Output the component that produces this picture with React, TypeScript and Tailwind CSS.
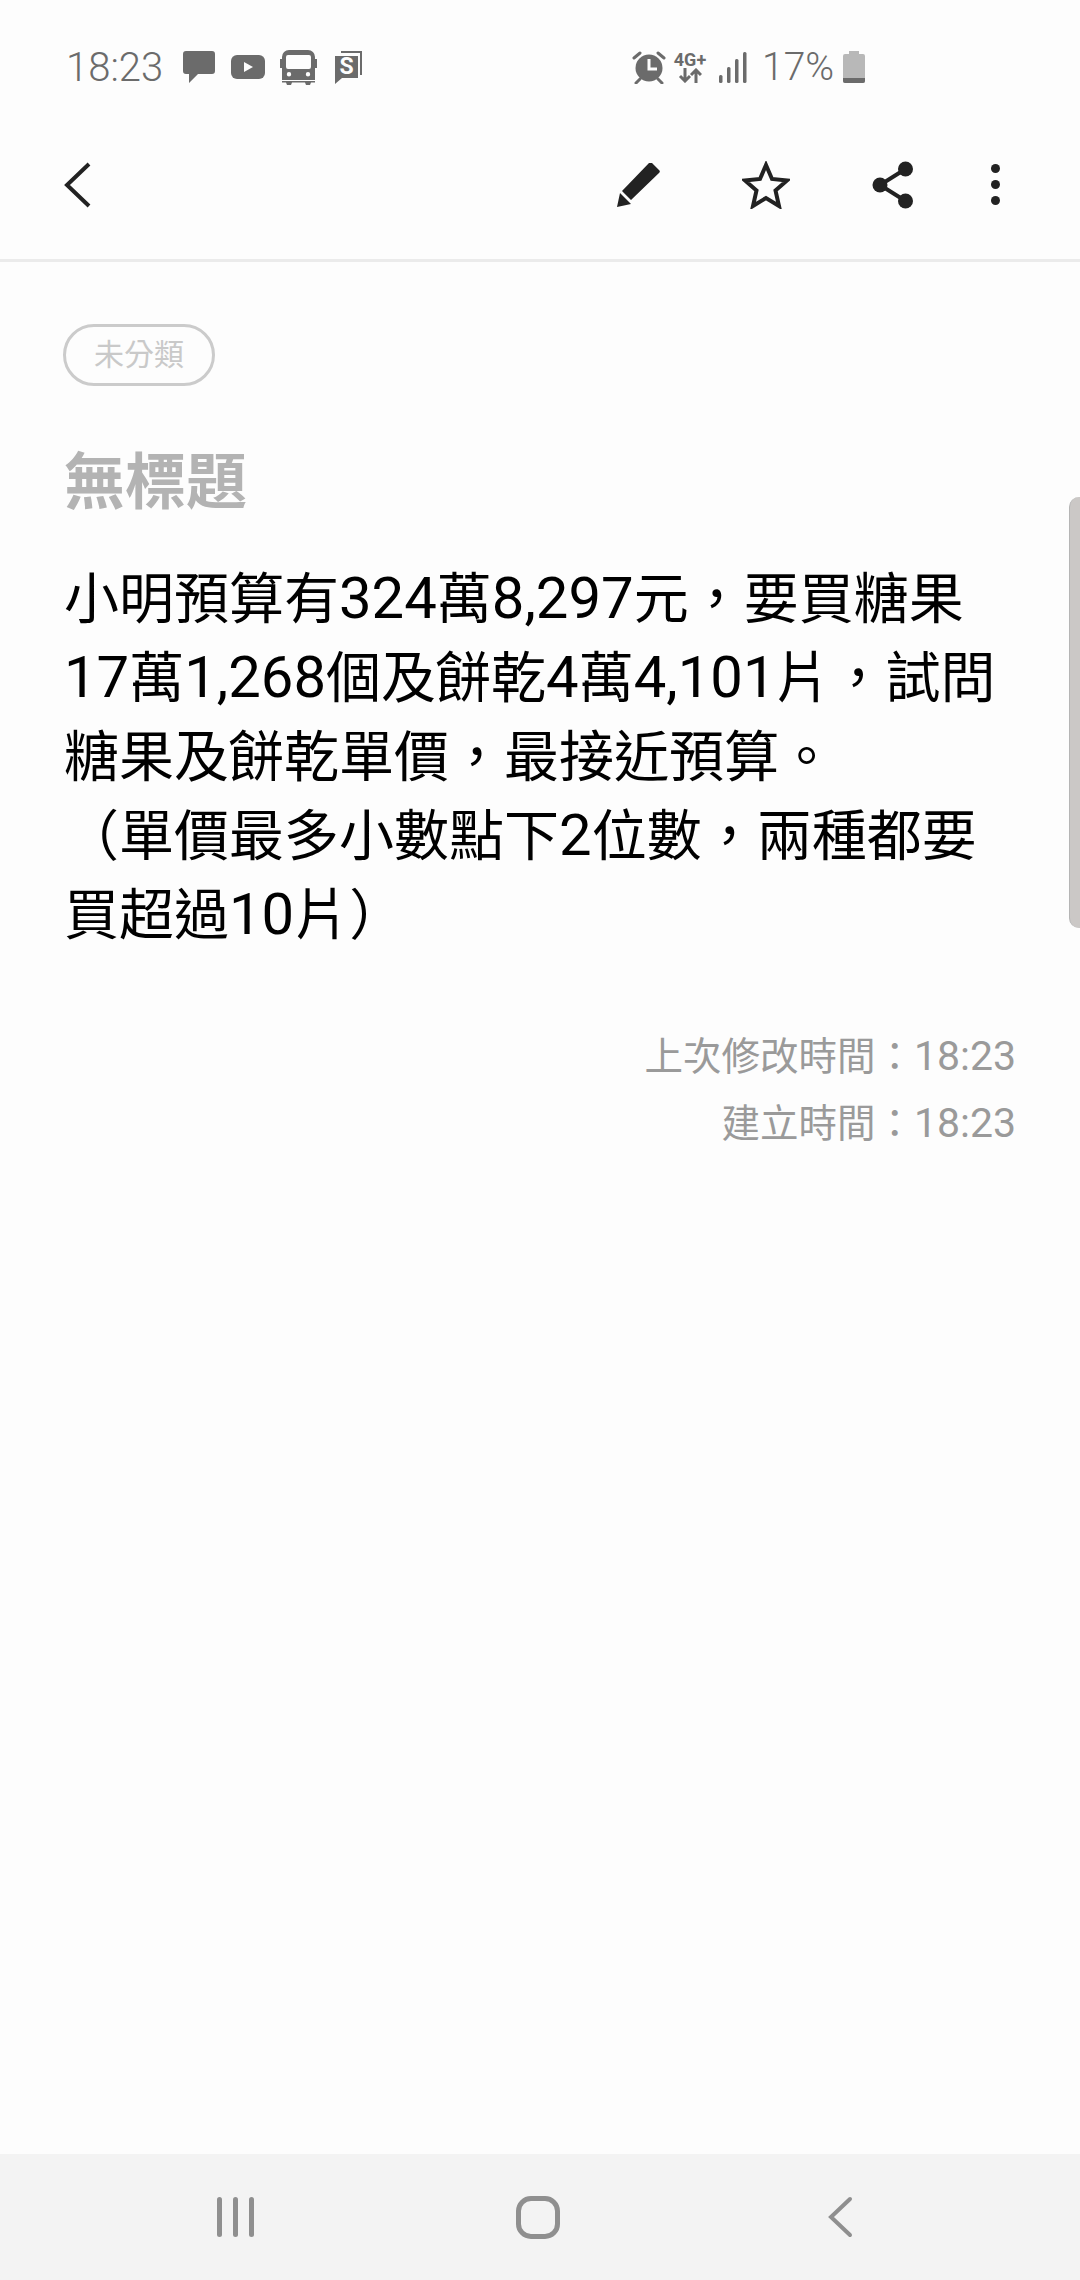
const cjk = 'font-["Roboto","Noto_Sans_CJK_TC",sans-serif]';

function MessageIcon() {
  return (
    <svg width="34" height="34" viewBox="0 0 34 34" className="fill-[#6b6b6b]">
      <path d="M4 1h26a3 3 0 0 1 3 3v17a3 3 0 0 1-3 3H16l-9 9v-9H4a3 3 0 0 1-3-3V4a3 3 0 0 1 3-3z" />
    </svg>
  );
}

function YoutubeIcon() {
  return (
    <svg width="34" height="24" viewBox="0 0 34 24">
      <rect width="34" height="24" rx="6" fill="#6b6b6b" />
      <path d="M13 7l9 5-9 5z" fill="#fdfdfd" />
    </svg>
  );
}

function BusIcon() {
  return (
    <svg width="37" height="35" viewBox="0 0 37 35" className="fill-[#6b6b6b]">
      <path
        fillRule="evenodd"
        d="M9 0h19a7 7 0 0 1 7 7v2h2v9h-2v12H2V18H0V9h2V7a7 7 0 0 1 7-7zM8 5a2 2 0 0 0-2 2v10a2 2 0 0 0 2 2h21a2 2 0 0 0 2-2V7a2 2 0 0 0-2-2zm1 17a2.200 2.200 0 1 0 0 4.400 2.200 2.200 0 0 0 0-4.400zm19 0a2.200 2.200 0 1 0 0 4.400 2.200 2.200 0 0 0 0-4.400z"
      />
      <path d="M2 31h33v1.500H31l-1 2.500h-4l-1-2.500H12l-1 2.500H7l-1-2.500H2z" />
    </svg>
  );
}

function NoteIcon() {
  return (
    <svg width="28" height="33" viewBox="0 0 28 33">
      <path d="M6 2V0h21v24h-2V2z" fill="#6b6b6b" />
      <path d="M0 5h23v22H7l-7 6z" fill="#6b6b6b" />
      <text x="11.500" y="23" textAnchor="middle" fontSize="23" fontWeight="700" fill="#fdfdfd" fontFamily="Roboto">
        S
      </text>
    </svg>
  );
}

function AlarmIcon() {
  return (
    <svg width="34" height="34" viewBox="0 0 34 34">
      <circle cx="17" cy="18" r="13.500" fill="#6b6b6b" />
      <path d="M17 9v10h8" fill="none" stroke="#fdfdfd" strokeWidth="3" />
      <path d="M2 8l6-5M32 8l-6-5M8 29l-4 4M26 29l4 4" stroke="#6b6b6b" strokeWidth="3" strokeLinecap="round" />
    </svg>
  );
}

function NetworkIcon() {
  return (
    <div className="flex flex-col items-center w-[32px]">
      <span className="font-['Roboto',sans-serif] font-bold text-[18px] leading-[16px] text-[#6b6b6b]">4G+</span>
      <svg width="24" height="15" viewBox="0 0 24 15" fill="none" stroke="#6b6b6b" strokeWidth="3">
        <path d="M7 0v13M2 8l5 5 5-5" />
        <path d="M18 15V2M13 7l5-5 5 5" />
      </svg>
    </div>
  );
}

function SignalIcon() {
  return (
    <svg width="28" height="31" viewBox="0 0 28 31" fill="#6b6b6b">
      <rect x="0" y="23" width="3.500" height="8" rx="1.500" />
      <rect x="8" y="15" width="3.500" height="16" rx="1.500" />
      <rect x="16" y="7" width="3.500" height="24" rx="1.500" />
      <rect x="24" y="0" width="3.500" height="31" rx="1.500" />
    </svg>
  );
}

function BatteryIcon() {
  return (
    <svg width="22" height="32" viewBox="0 0 22 32">
      <path d="M6 0h10v3h4a2 2 0 0 1 2 2v25a2 2 0 0 1-2 2H2a2 2 0 0 1-2-2V5a2 2 0 0 1 2-2h4z" fill="#b8b8b8" />
      <path d="M0 27h22v3a2 2 0 0 1-2 2H2a2 2 0 0 1-2-2z" fill="#6b6b6b" />
    </svg>
  );
}

function StatusBar() {
  return (
    <div className="h-[133px] pt-[49px] pl-[66px] flex items-start text-[#6b6b6b]">
      <span className="font-['Roboto',sans-serif] font-light text-[40px] leading-[38px] w-[116px]">18:23</span>
      <div className="flex items-center h-[36px] gap-[15px]">
        <MessageIcon />
        <YoutubeIcon />
        <BusIcon />
        <div className="ml-[3px]">
          <NoteIcon />
        </div>
      </div>
      <div className="flex items-center h-[36px] ml-[269px]">
        <AlarmIcon />
        <div className="ml-[8px]">
          <NetworkIcon />
        </div>
        <div className="ml-[13px]">
          <SignalIcon />
        </div>
        <span className="ml-[15px] font-['Roboto',sans-serif] font-light text-[39px] leading-[38px]">17%</span>
        <div className="ml-[9px]">
          <BatteryIcon />
        </div>
      </div>
    </div>
  );
}

function Toolbar() {
  return (
    <div className="h-[129px] border-b-[3px] border-[#ebebeb] flex items-center pl-[62px] pb-[23px]">
      <svg width="32" height="46" viewBox="0 0 32 46" fill="none" stroke="#222" strokeWidth="4">
        <path d="M27 2L5 23l22 21" />
      </svg>
      <div className="ml-[522px]">
        <svg width="44" height="44" viewBox="0 0 44 44" fill="#222">
          <path d="M33 1a2 2 0 0 1 3 0l7 7a2 2 0 0 1 0 3L15 38 6 29z" transform="translate(0 -1)" />
          <path d="M1 44l3-14 11 11z" />
        </svg>
      </div>
      <div className="ml-[82px]">
        <svg width="48" height="48" viewBox="0 0 48 48" fill="none" stroke="#222" strokeWidth="4" strokeLinejoin="miter">
          <path d="M24 4l6 14 15 1.500-11.500 10L37 45l-13-8-13 8 3.500-15.500L3 19.500 18 18z" />
        </svg>
      </div>
      <div className="ml-[82px]">
        <svg width="42" height="48" viewBox="0 0 42 48" fill="#222">
          <circle cx="33.500" cy="8" r="7.500" />
          <circle cx="8" cy="24" r="7.500" />
          <circle cx="33.500" cy="40" r="7.500" />
          <path d="M33.500 8L8 24l25.500 16" fill="none" stroke="#222" strokeWidth="4" />
        </svg>
      </div>
      <div className="ml-[77px] flex flex-col gap-[7px]">
        <div className="w-[9px] h-[9px] rounded-full bg-[#222]" />
        <div className="w-[9px] h-[9px] rounded-full bg-[#222]" />
        <div className="w-[9px] h-[9px] rounded-full bg-[#222]" />
      </div>
    </div>
  );
}

function NavBar() {
  return (
    <div className="h-[126px] bg-[#f3f3f3] flex items-center">
      <div className="ml-[217px] flex gap-[11px]">
        <div className="w-[5px] h-[40px] rounded-full bg-[#8f8f8f]" />
        <div className="w-[5px] h-[40px] rounded-full bg-[#8f8f8f]" />
        <div className="w-[5px] h-[40px] rounded-full bg-[#8f8f8f]" />
      </div>
      <div className="ml-[262px] w-[44px] h-[43px] rounded-[15px] border-[5px] border-[#8f8f8f]" />
      <svg className="ml-[267px]" width="26" height="42" viewBox="0 0 26 42" fill="none" stroke="#8f8f8f" strokeWidth="4" strokeLinecap="round">
        <path d="M23 3L4 21l19 18" />
      </svg>
    </div>
  );
}

// digits in the note render a bit larger than the CJK glyphs around them
function Num({ children }: { children: string }) {
  return <span className="text-[58px] leading-[0]">{children}</span>;
}

export default function App() {
  return (
    <div className="relative w-[1080px] h-[2280px] bg-[#fdfdfd] flex flex-col overflow-hidden">
      <StatusBar />
      <Toolbar />
      <div className={`flex-1 pl-[63px] pr-[64px] pt-[62px] ${cjk}`}>
        <div className="w-[152px] h-[62px] rounded-full border-[3px] border-[#cbcbcb] flex items-center justify-center text-[30px] text-[#c9c9c9] leading-none">
          未分類
        </div>
        <h1 className="mt-[57px] pl-[1px] text-[61px] leading-[80px] font-bold text-[#b3b3b3]">無標題</h1>
        <p className="mt-[37px] pl-[1px] text-[55px] leading-[79px] text-black whitespace-nowrap">
          小明預算有<Num>324</Num>萬<Num>8,297</Num>元，要買糖果
          <br />
          <Num>17</Num>萬<Num>1,268</Num>個及餅乾<Num>4</Num>萬<Num>4,101</Num>片，試問
          <br />
          糖果及餅乾單價，最接近預算。
          <br />
          （單價最多小數點下<Num>2</Num>位數，兩種都要
          <br />
          買超過<Num>10</Num>片）
        </p>
        <div className="mt-[68px] text-right text-[38.5px] leading-[67px] text-[#9a9a9a]">
          <div>
            上次修改時間：<span className="text-[41px] leading-[0]">18:23</span>
          </div>
          <div>
            建立時間：<span className="text-[41px] leading-[0]">18:23</span>
          </div>
        </div>
      </div>
      <NavBar />
      <div className="absolute right-0 top-[497px] w-[11px] h-[431px] rounded-l-[10px] bg-[#cbc8c6] border-l border-[#b5b5b5]" />
    </div>
  );
}
